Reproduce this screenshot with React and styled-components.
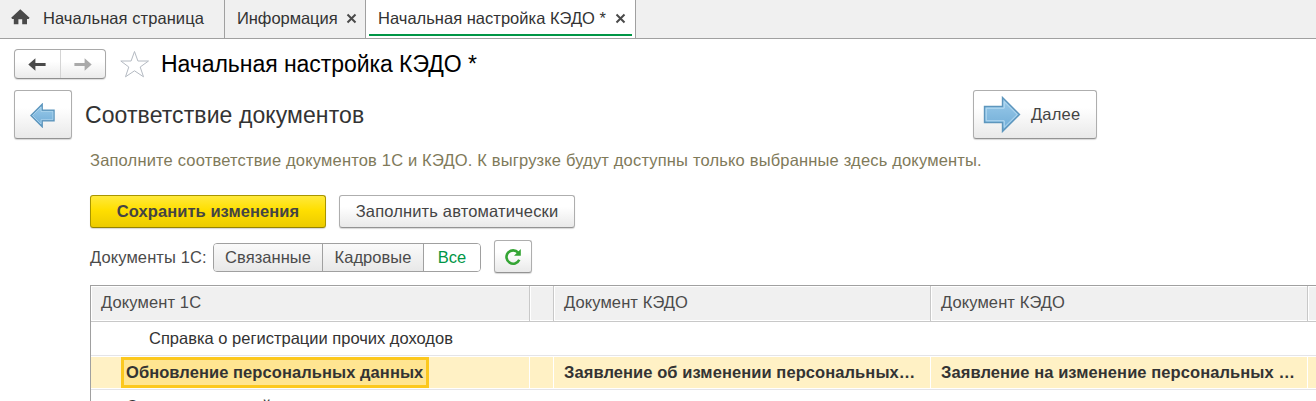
import React from 'react';
import styled, { createGlobalStyle } from 'styled-components';

const GlobalStyle = createGlobalStyle`
  * { box-sizing: border-box; }
  body {
    margin: 0;
    background: #fff;
    color: #333;
    font: 16.5px/20px "Liberation Sans", Arial, sans-serif;
    overflow: hidden;
  }
  button { font: inherit; padding: 0; margin: 0; }
  h1, h2, p { margin: 0; font-weight: 400; }
`;

const Page = styled.div`
  width: 1316px;
  height: 401px;
  overflow: hidden;
`;

const Text = styled.span`
  white-space: pre;
  letter-spacing: ${(p) => p.$ls || 0}px;
`;

const TabBar = styled.nav`
  display: flex;
  height: 39px;
  background: #f0f0f0;
  border-bottom: 1px solid #a0a0a0;
`;

const Tab = styled.div`
  display: flex;
  flex: none;
  align-items: flex-start;
  width: ${(p) => p.$w}px;
  height: 38px;
  padding: 8px 0 0 ${(p) => p.$pl || 12}px;
  border-right: 1px solid #a0a0a0;
  background: ${(p) => (p.$active ? '#fff' : 'transparent')};
`;

const ActiveTab = styled(Tab)`
  flex-direction: column;
  padding: 8px 3px 0;
`;

const TabLine = styled.div`
  display: flex;
  width: 100%;
  padding-left: 9px;
  height: 26px;
  flex: none;
`;

const Underline = styled.div`
  width: 100%;
  height: 2px;
  background: #009646;
`;

const HomeIcon = styled.svg`
  width: 20px;
  height: 18px;
  margin: 0 12px 0 0;
`;

const CloseIcon = styled.svg`
  width: 11px;
  height: 11px;
  margin: 5px 0 0 ${(p) => p.$ml || 8}px;
`;

const TitleRow = styled.header`
  display: flex;
  align-items: flex-start;
  height: 51px;
  padding: 10px 0 0 14px;
`;

const NavGroup = styled.div`
  display: flex;
  width: 92px;
  height: 30px;
  border: 1px solid #a9a9a9;
  border-bottom-color: #8f8f8f;
  border-radius: 4px;
  background: linear-gradient(#fff 40%, #ebebeb);
  box-shadow: 0 1px 1px #ddd;
`;

const NavButton = styled.button`
  flex: 1;
  border: 0;
  background: none;
  display: flex;
  align-items: center;
  justify-content: center;
  padding-top: 1px;
  & + & { border-left: 1px solid #d4d4d4; }
`;

const Star = styled.svg`
  width: 30px;
  height: 28px;
  margin: 1px 0 0 14px;
`;

const Title = styled.h1`
  margin-left: 11px;
  font-size: 23px;
  line-height: 30px;
  color: #000;
`;

const StepRow = styled.section`
  display: flex;
  align-items: flex-start;
  height: 60px;
  padding-left: 14px;
`;

const Button = styled.button`
  display: flex;
  flex: none;
  align-items: center;
  justify-content: center;
  width: ${(p) => p.$w}px;
  height: ${(p) => p.$h}px;
  padding-bottom: ${(p) => p.$pb || 0}px;
  border: 1px solid #aeaeae;
  border-bottom-color: #939393;
  border-radius: 3px;
  background: linear-gradient(#fff 35%, #e9e9e9);
  box-shadow: 0 1px 1px #d8d8d8;
  color: #444;
`;

const PrimaryButton = styled(Button)`
  border-color: #a89500;
  border-bottom-color: #958300;
  background: linear-gradient(#ffe93c, #ffdf00 45%, #eccb00);
  font-weight: 700;
`;

const BackButton = styled(Button)`
  padding: 2px 2px 0 0;
`;

const NextButton = styled(Button)`
  justify-content: flex-start;
  padding-left: 9px;
  gap: 10px;
`;

const NextLabel = styled.span`
  margin-top: -2px;
`;

const StepTitle = styled.h2`
  width: 901px;
  padding-left: 13px;
  font-size: 23px;
  line-height: 30px;
  margin-top: 10px;
`;

const Hint = styled.p`
  height: 45px;
  padding-left: 90px;
  color: #7f7a5a;
`;

const Actions = styled.div`
  display: flex;
  gap: 13px;
  height: 45px;
  padding-left: 90px;
`;

const FilterRow = styled.div`
  display: flex;
  height: 45px;
  padding-left: 90px;
  color: #4b4b4b;
`;

const FilterLabel = styled.div`
  width: 123px;
  padding-top: 7px;
`;

const Segments = styled.div`
  display: flex;
  width: 268px;
  height: 29px;
  margin: 3px 13px 0 0;
  border: 1px solid #a0a0a0;
  border-radius: 4px;
  overflow: hidden;
`;

const Segment = styled.button`
  width: ${(p) => p.$w}px;
  padding-bottom: 2px;
  border: 0;
  border-right: ${(p) => (p.$active ? 0 : '1px solid #a0a0a0')};
  color: ${(p) => (p.$active ? '#009646' : '#4b4b4b')};
  background: ${(p) => (p.$active ? '#fff' : 'linear-gradient(#fafafa, #e8e8e8)')};
`;

const Table = styled.div`
  margin-left: 90px;
  height: 116px;
  border-top: 1px solid #a0a0a0;
  border-left: 1px solid #a0a0a0;
  overflow: hidden;
`;

const Row = styled.div`
  display: grid;
  grid-template-columns: 439px 24px 377px 377px 8px;
  height: 34px;
  border-bottom: 1px solid #e4e4e8;
`;

const HeadRow = styled(Row)`
  height: 36px;
  border-bottom-color: #c8c8c8;
`;

const HeadCell = styled.div`
  padding: 5px 0 0 9px;
  border: 1px solid #fff;
  background: #f0f0f0;
  color: #4b4b4b;
  box-shadow: ${(p) => (p.$first ? 'none' : '-1px 0 0 #c8c8c8')};
`;

const Cell = styled.div`
  padding: 6px 0 0 ${(p) => p.$pl || 10}px;
  white-space: nowrap;
`;

const SelectedRow = styled(Row)`
  font-weight: 700;
  padding: 1px 0;
`;

const SelectedCell = styled.div`
  display: flex;
  padding: 5px 0 0 10px;
  background: #fff1c5;
  white-space: nowrap;
  border-right: 1px solid #fff;
`;

const FocusBox = styled.div`
  width: 308px;
  height: 31px;
  margin: -5px 0 0 20px;
  padding: 2px 0 0 2px;
  border: 3px solid #fcc81e;
  background: #ffe591;
`;

const Close = ({ ml }) => (
  <CloseIcon $ml={ml} viewBox="0 0 11 11">
    <path d="M1.5 1.5 9.5 9.5M9.5 1.5 1.5 9.5" stroke="#4a4a4a" strokeWidth="2" />
  </CloseIcon>
);

const NavArrow = ({ color, flip }) => (
  <svg width="18" height="13" viewBox="0 0 18 13" transform={flip ? 'scale(-1 1)' : undefined}>
    <path d="M.3 6.5 7.4 .2V5H17.6V8H7.4V12.8Z" fill={color} />
  </svg>
);

const BlueArrow = ({ w, h, flip }) => (
  <svg width={w} height={h} viewBox="0 0 38 37" transform={flip ? 'scale(-1 1)' : undefined}>
    <defs>
      <linearGradient id="blueFill" x1="0" y1="0" x2="0" y2="1">
        <stop offset="0" stopColor="#9bcbea" />
        <stop offset="1" stopColor="#6eabd6" />
      </linearGradient>
    </defs>
    <path d="M1.5 10.5H19.5V1.5L36.5 18.5 19.5 35.5V26.5H1.5Z" fill="url(#blueFill)" stroke="#5d96bd" strokeWidth={flip ? 2.2 : 1.4} />
    <path d="M3.2 12.2H21.2V5.6L34.2 18.5 21.2 31.4V24.8H3.2Z" fill="none" stroke="#b9dcf2" strokeWidth="1" />
  </svg>
);

export default function App() {
  return (
    <Page>
      <GlobalStyle />
      <TabBar>
        <Tab $w={225} $pl={11}>
          <HomeIcon viewBox="0 0 20 18">
            <path d="M9.3 1.3 18.6 9.8 17.6 11H16V16.3H11.2V11.3H7.4V16.3H2.8V11H1.2L.2 9.8Z" fill="#4a4a4a" />
          </HomeIcon>
          <Text $ls={0.07}>Начальная страница</Text>
        </Tab>
        <Tab $w={141}>
          <Text $ls={-0.05}>Информация</Text>
          <Close ml={8} />
        </Tab>
        <ActiveTab $w={270} $active>
          <TabLine>
            <Text $ls={0.02}>Начальная настройка КЭДО *</Text>
            <Close ml={9} />
          </TabLine>
          <Underline />
        </ActiveTab>
      </TabBar>

      <TitleRow>
        <NavGroup>
          <NavButton><NavArrow color="#4a4a4a" /></NavButton>
          <NavButton><NavArrow color="#aaa" flip /></NavButton>
        </NavGroup>
        <Star viewBox="0 0 30 28">
          <path d="M14.5 1.5 17.9 11H28.5L20.2 17 23.5 26.8 14.5 20.8 5.5 26.8 8.8 17 .8 11H11.1Z" fill="#fff" stroke="#b4bac2" strokeWidth="1" />
        </Star>
        <Title><Text $ls={-0.05}>Начальная настройка КЭДО *</Text></Title>
      </TitleRow>

      <StepRow>
        <BackButton $w={58} $h={49}><BlueArrow w={25} h={25} flip /></BackButton>
        <StepTitle><Text $ls={0.09}>Соответствие документов</Text></StepTitle>
        <NextButton $w={124} $h={49}>
          <BlueArrow w={38} h={37} />
          <NextLabel><Text $ls={0.2}>Далее</Text></NextLabel>
        </NextButton>
      </StepRow>

      <Hint><Text $ls={0.173}>Заполните соответствие документов 1С и КЭДО. К выгрузке будут доступны только выбранные здесь документы.</Text></Hint>

      <Actions>
        <PrimaryButton $w={236} $h={33} $pb={2}><Text $ls={0.06}>Сохранить изменения</Text></PrimaryButton>
        <Button $w={236} $h={33} $pb={2}><Text $ls={0.15}>Заполнить автоматически</Text></Button>
      </Actions>

      <FilterRow>
        <FilterLabel><Text $ls={0.1}>Документы 1С:</Text></FilterLabel>
        <Segments>
          <Segment $w={109}><Text $ls={0.05}>Связанные</Text></Segment>
          <Segment $w={101}><Text $ls={0.03}>Кадровые</Text></Segment>
          <Segment $w={56} $active><Text>Все</Text></Segment>
        </Segments>
        <Button $w={38} $h={33}>
          <svg width="18" height="18" viewBox="0 0 18 18">
            <path d="M14.2 4.6A6.7 6.7 0 1 0 15.3 11.8" fill="none" stroke="#35a535" strokeWidth="2.6" />
            <path d="M16.8 1V7.8H10Z" fill="#35a535" />
          </svg>
        </Button>
      </FilterRow>

      <Table>
        <HeadRow>
          <HeadCell $first><Text $ls={0.12}>Документ 1С</Text></HeadCell>
          <HeadCell />
          <HeadCell><Text $ls={0.1}>Документ КЭДО</Text></HeadCell>
          <HeadCell><Text $ls={0.1}>Документ КЭДО</Text></HeadCell>
          <HeadCell />
        </HeadRow>
        <Row>
          <Cell $pl={58}><Text>Справка о регистрации прочих доходов</Text></Cell>
        </Row>
        <SelectedRow>
          <SelectedCell>
            <FocusBox><Text $ls={0.07}>Обновление персональных данных</Text></FocusBox>
          </SelectedCell>
          <SelectedCell />
          <SelectedCell><Text $ls={0.08}>Заявление об изменении персональных…</Text></SelectedCell>
          <SelectedCell><Text $ls={0.08}>Заявление на изменение персональных …</Text></SelectedCell>
          <SelectedCell />
        </SelectedRow>
        <Row>
          <Cell $pl={35}><Text $ls={-0.3}>Сведения трудовой</Text></Cell>
        </Row>
      </Table>
    </Page>
  );
}
